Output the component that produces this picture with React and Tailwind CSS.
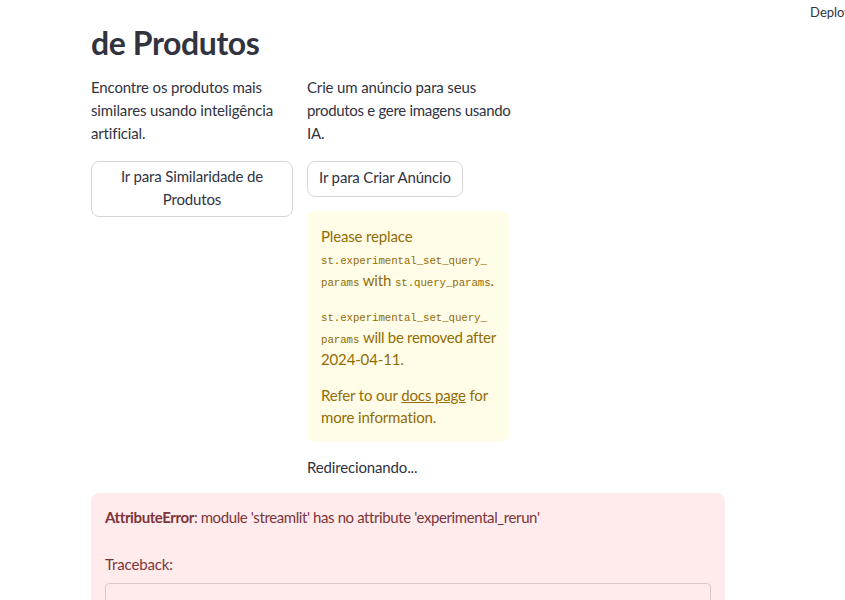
import React from "react";

const sans = { fontFamily: "Lato, 'Noto Sans', sans-serif" };

const Code = ({ children }) => (
  <code className="font-['Liberation_Mono',monospace] text-[10.8px] leading-[12px] tracking-[-0.1px]">{children}</code>
);

export default function App() {
  return (
    <div className="relative min-h-[600px] w-[845px] overflow-hidden bg-white text-[#31333F]" style={sans}>
      {/* header */}
      <div className="absolute right-0 top-0 flex h-[26px] items-center">
        <span className="mr-[-6px] text-[13px] text-[#31333F]">Deploy</span>
      </div>

      <div className="ml-[91px] w-[634px] pt-[22px]">
        <h1 className="text-[32px] font-bold leading-[42px] tracking-[-0.4px]">de Produtos</h1>

        <div className="mt-[12px] grid grid-cols-3 gap-x-[14px] text-[15px] leading-[23px] tracking-[-0.15px]">
          {/* column 1 */}
          <div className="flex flex-col">
            <p>
              Encontre os produtos mais<br />similares usando inteligência<br />artificial.
            </p>
            <button className="mt-[16px] rounded-[8px] border border-[#d6d6d9] bg-white px-[12px] pt-[3px] pb-[5px] text-center leading-[23px]">
              Ir para Similaridade de<br />Produtos
            </button>
          </div>

          {/* column 2 */}
          <div className="flex flex-col items-start">
            <p className="whitespace-nowrap">
              Crie um anúncio para seus<br />
              <span className="tracking-[-0.3px]">produtos e gere imagens usando</span>
              <br />IA.
            </p>
            <button className="mt-[16px] flex h-[36px] items-center rounded-[8px] border border-[#d6d6d9] bg-white px-[11px] pb-[3px] leading-[23px]">
              Ir para Criar Anúncio
            </button>
            <div className="mt-[14px] w-full whitespace-nowrap rounded-[8px] bg-[#FFFDE7] px-[14px] pt-[14px] pb-[14px] leading-[22px] text-[#926C05]">
              <p>
                Please replace<br />
                <Code>st.experimental_set_query_</Code>
                <br />
                <Code>params</Code> with <Code>st.query_params</Code>.
              </p>
              <p className="mt-[13px]">
                <Code>st.experimental_set_query_</Code>
                <br />
                <Code>params</Code> <span className="tracking-[-0.3px]">will be removed after</span>
                <br />2024-04-11.
              </p>
              <p className="mt-[14px]">
                Refer to our <span className="underline">docs page</span> for<br />more information.
              </p>
            </div>
            <p className="mt-[14px]">Redirecionando...</p>
          </div>

          <div />
        </div>

        {/* error */}
        <div className="mt-[14px] rounded-[8px] bg-[#FFEBEC] px-[14px] pt-[13px] pb-[16px] text-[15px] leading-[23px] text-[#7D353B]">
          <p className="tracking-[-0.4px]">
            <span className="font-bold">AttributeError</span>: module 'streamlit' has no attribute 'experimental_rerun'
          </p>
          <p className="mt-[24px] tracking-[-0.15px]">Traceback:</p>
          <div className="mt-[7px] h-[80px] rounded-[4px] border border-[#dcc8ca]" />
        </div>
      </div>
    </div>
  );
}
